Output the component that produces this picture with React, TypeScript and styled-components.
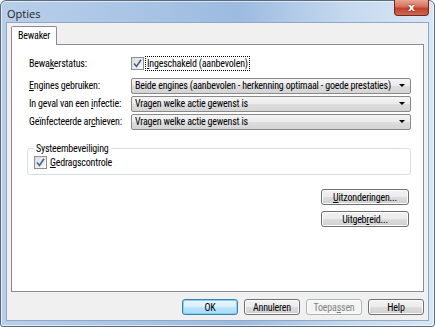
import React from "react";
import styled, { createGlobalStyle } from "styled-components";

const GlobalStyle = createGlobalStyle`
  html, body {
    margin: 0;
    padding: 0;
    width: 435px;
    height: 327px;
    overflow: hidden;
    background: #ffffff;
  }
  body {
    font-family: "Roboto Condensed", "DejaVu Sans Condensed", "Liberation Sans", sans-serif;
    font-size: 10px;
    letter-spacing: -0.2px;
    color: #000;
  }
`;

const Win = styled.div`
  box-sizing: border-box;
  width: 435px;
  height: 327px;
  display: flex;
  flex-direction: column;
  border: 1px solid #5a6b80;
  border-radius: 6px 6px 3px 3px;
  background: linear-gradient(90deg, #b8cfe9 0%, #a7c3e4 35%, #9cbbe0 55%, #c5d9ef 80%, #d9e6f4 100%);
  padding: 0 5px 5px 5px;
  box-shadow: inset 0 0 0 1px rgba(255, 255, 255, 0.6);
`;

const TitleBar = styled.div`
  height: 21px;
  display: flex;
  align-items: flex-start;
  justify-content: space-between;
`;

const Title = styled.div`
  padding: 5px 0 0 1px;
  font-family: "Open Sans", "Liberation Sans", sans-serif;
  font-size: 11px;
  letter-spacing: 0;
  color: #1e1e1e;
`;

const CloseBtn = styled.div`
  width: 35px;
  height: 16px;
  margin-top: -1px;
  box-sizing: border-box;
  border: 1px solid #6b2a22;
  border-top: none;
  border-radius: 0 0 4px 4px;
  background: linear-gradient(180deg, #e8a493 0%, #d7705a 45%, #c0412a 55%, #d06a4e 100%);
  display: flex;
  align-items: center;
  justify-content: center;
  color: #fff;
  font-family: "DejaVu Sans", sans-serif;
  font-weight: bold;
  font-size: 11px;
  text-shadow: 0 0 2px #5a1a10;
`;

const Client = styled.div`
  flex: 1;
  display: flex;
  flex-direction: column;
  background: #f0f0f0;
  border: 1px solid #8fa8c6;
  padding: 3px 4px 5px 4px;
`;

const TabStrip = styled.div`
  display: flex;
  height: 18px;
`;

const Tab = styled.div`
  box-sizing: border-box;
  height: 19px;
  padding: 3px 6px 0 6px;
  border: 1px solid #898c95;
  border-bottom: none;
  border-radius: 2px 2px 0 0;
  background: #ffffff;
  position: relative;
  z-index: 1;
`;

const Panel = styled.div`
  height: 248px;
  box-sizing: border-box;
  background: #ffffff;
  border: 1px solid #898c95;
  padding: 10px 12px 0 17px;
  display: flex;
  flex-direction: column;
`;

const FormRow = styled.div<{ $gap?: number }>`
  display: flex;
  align-items: center;
  height: 17px;
  margin-bottom: ${({ $gap }) => $gap ?? 0}px;
`;

const Label = styled.div`
  width: 102px;
  flex-shrink: 0;
  white-space: nowrap;
`;

const Check = styled.span`
  box-sizing: border-box;
  width: 13px;
  height: 13px;
  border: 1px solid #8e8f8f;
  background: linear-gradient(135deg, #dcdcdc, #f8f8f8);
  display: inline-flex;
  align-items: center;
  justify-content: center;
  margin-right: 2px;
  flex-shrink: 0;
`;

const CheckLabel = styled.span<{ $focus?: boolean }>`
  padding: 0 1px;
  outline: ${({ $focus }) => ($focus ? "1px dotted #000" : "none")};
  white-space: nowrap;
  line-height: 13px;
`;

const Combo = styled.div`
  flex: 1;
  box-sizing: border-box;
  height: 16px;
  border: 1px solid #8a8a8a;
  border-radius: 2px;
  background: linear-gradient(180deg, #f4f4f4 0%, #ebebeb 50%, #dddddd 51%, #d4d4d4 100%);
  display: flex;
  align-items: center;
  padding: 0 5px 0 3px;
  white-space: nowrap;
`;

const ComboText = styled.span`
  flex: 1;
  overflow: hidden;
`;

const Arrow = styled.span`
  width: 0;
  height: 0;
  border-left: 3px solid transparent;
  border-right: 3px solid transparent;
  border-top: 3px solid #000;
  margin-left: 4px;
`;

const Group = styled.fieldset`
  margin: 13px 0 0 -2px;
  padding: 0 0 5px 6px;
  border: 1px solid #d5dfe5;
  border-radius: 3px;
  height: 32px;
  box-sizing: border-box;
`;

const Legend = styled.legend`
  padding: 0 2px;
  line-height: 11px;
`;

const SideButtons = styled.div`
  display: flex;
  flex-direction: column;
  align-items: flex-end;
  gap: 6px;
  margin: 14px 2px 0 0;
`;

const Button = styled.div<{ $default?: boolean; $disabled?: boolean; $w?: number }>`
  box-sizing: border-box;
  width: ${({ $w }) => $w ?? 56}px;
  height: 16px;
  border: 1px solid ${({ $default, $disabled }) => ($disabled ? "#adb2b5" : $default ? "#3c7fb1" : "#707070")};
  border-radius: 3px;
  background: ${({ $disabled, $default }) =>
    $disabled
      ? "#f4f4f4"
      : $default
      ? "linear-gradient(180deg, #eaf6fd 0%, #d9f0fc 50%, #bee6fd 51%, #a7d9f5 100%)"
      : "linear-gradient(180deg, #f2f2f2 0%, #ebebeb 50%, #dddddd 51%, #cfcfcf 100%)"};
  box-shadow: ${({ $default }) => ($default ? "inset 0 0 0 1px #7fd3f8" : "inset 0 0 0 1px #fcfcfc")};
  color: ${({ $disabled }) => ($disabled ? "#838383" : "#000")};
  display: flex;
  align-items: center;
  justify-content: center;
  white-space: nowrap;
`;

const Footer = styled.div`
  display: flex;
  justify-content: flex-end;
  gap: 6px;
  margin-top: 7px;
`;

const U = styled.span`
  text-decoration: underline;
`;

function Tick() {
  return (
    <svg width="9" height="9" viewBox="0 0 9 9">
      <path d="M1 4.5 L3.5 7.5 L8 0.8" fill="none" stroke="#4a5f97" strokeWidth="1.6" />
    </svg>
  );
}

export default function App() {
  return (
    <>
      <GlobalStyle />
      <Win>
        <TitleBar>
          <Title>Opties</Title>
          <CloseBtn>x</CloseBtn>
        </TitleBar>
        <Client>
          <TabStrip>
            <Tab>Bewaker</Tab>
          </TabStrip>
          <Panel>
            <FormRow $gap={5}>
              <Label>
                Bewa<U>k</U>erstatus:
              </Label>
              <Check>
                <Tick />
              </Check>
              <CheckLabel $focus>
                <U>I</U>ngeschakeld (aanbevolen)
              </CheckLabel>
            </FormRow>
            <FormRow $gap={1}>
              <Label>
                <U>E</U>ngines gebruiken:
              </Label>
              <Combo>
                <ComboText>Beide engines (aanbevolen - herkenning optimaal - goede prestaties)</ComboText>
                <Arrow />
              </Combo>
            </FormRow>
            <FormRow $gap={1}>
              <Label>
                In geval van een <U>i</U>nfectie:
              </Label>
              <Combo>
                <ComboText>Vragen welke actie gewenst is</ComboText>
                <Arrow />
              </Combo>
            </FormRow>
            <FormRow>
              <Label>
                Geïnfecteerde ar<U>c</U>hieven:
              </Label>
              <Combo>
                <ComboText>Vragen welke actie gewenst is</ComboText>
                <Arrow />
              </Combo>
            </FormRow>
            <Group>
              <Legend>Systeembeveiliging</Legend>
              <FormRow>
                <Check>
                  <Tick />
                </Check>
                <CheckLabel>
                  <U>G</U>edragscontrole
                </CheckLabel>
              </FormRow>
            </Group>
            <SideButtons>
              <Button $w={88}>
                <U>U</U>itzonderingen...
              </Button>
              <Button $w={88}>
                Uitgeb<U>r</U>eid...
              </Button>
            </SideButtons>
          </Panel>
          <Footer>
            <Button $default>OK</Button>
            <Button>Annuleren</Button>
            <Button $disabled>
              Toepa<U>s</U>sen
            </Button>
            <Button>Help</Button>
          </Footer>
        </Client>
      </Win>
    </>
  );
}
